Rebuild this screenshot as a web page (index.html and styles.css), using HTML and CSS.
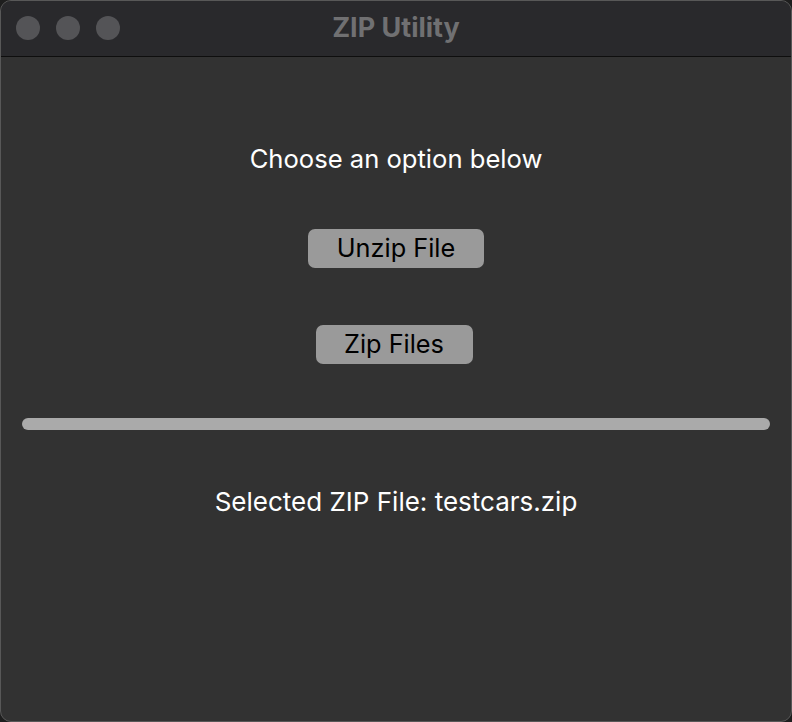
FILE: index.html
```html
<!DOCTYPE html>
<html>
<head>
<meta charset="utf-8">
<title>ZIP Utility</title>
<link rel="stylesheet" href="styles.css">
</head>
<body>
<div class="window">
  <header class="titlebar">
    <div class="lights">
      <span class="light"></span>
      <span class="light"></span>
      <span class="light"></span>
    </div>
    <div class="title">ZIP Utility</div>
  </header>
  <main class="content">
    <p class="prompt">Choose an option below</p>
    <button class="btn btn-unzip">Unzip File</button>
    <button class="btn btn-zip">Zip Files</button>
    <div class="progress"></div>
    <p class="status">Selected ZIP File: testcars.zip</p>
  </main>
</div>
</body>
</html>
```

FILE: styles.css
```css
html, body {
  margin: 0;
  padding: 0;
  background: #1e1e1e;
}
body {
  width: 792px;
  height: 722px;
  font-family: Inter, "Liberation Sans", Arial, sans-serif;
}
.window {
  box-sizing: border-box;
  width: 792px;
  height: 722px;
  border: 1px solid #585858;
  border-radius: 11px;
  overflow: hidden;
  background: #323232;
  display: flex;
  flex-direction: column;
}
.titlebar {
  position: relative;
  height: 55px;
  flex: none;
  background: #29292c;
  border-bottom: 1px solid #0e0e0e;
  display: flex;
  align-items: center;
}
.lights {
  display: flex;
  gap: 16px;
  padding-left: 15px;
}
.light {
  width: 24px;
  height: 24px;
  border-radius: 50%;
  background: #545457;
  margin-top: -2px;
}
.title {
  position: absolute;
  left: 0;
  right: 0;
  top: 0;
  height: 55px;
  line-height: 53px;
  text-align: center;
  font-family: Inter, sans-serif;
  font-weight: 700;
  font-size: 27px;
  color: #707072;
  pointer-events: none;
}
.content {
  flex: 1;
  display: flex;
  flex-direction: column;
  align-items: center;
}
.prompt {
  margin: 88px 0 0;
  font-size: 25.6px;
  line-height: 28px;
  color: #ffffff;
}
.btn {
  margin: 0;
  border: none;
  border-radius: 7px;
  background: #9a9a9a;
  color: #000;
  font-family: Inter, "Liberation Sans", Arial, sans-serif;
  font-size: 25.3px;
  height: 39px;
  padding: 0 0 2px;
}
.btn-unzip {
  width: 176px;
  margin-top: 56px;
}
.btn-zip {
  width: 157px;
  margin-top: 57px;
  margin-right: 4px;
}
.progress {
  align-self: stretch;
  margin: 54px 21px 0 21px;
  height: 12px;
  border-radius: 6px;
  background: #aaaaaa;
}
.status {
  margin: 57px 0 0;
  font-size: 26px;
  line-height: 30px;
  color: #ffffff;
}
```
